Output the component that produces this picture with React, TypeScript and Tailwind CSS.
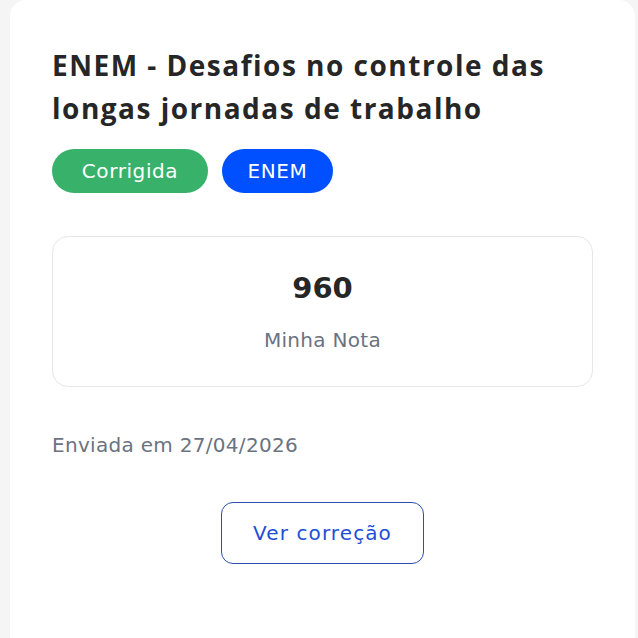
export default function App() {
  const body = { fontFamily: '"DejaVu Sans", "Open Sans", sans-serif' };
  return (
    <div className="min-h-[638px] w-[638px] overflow-hidden bg-[#f5f5f5] pl-[10px] pr-[3px]" style={body}>
      <div className="min-h-[638px] rounded-t-[16px] bg-white px-[42px] pt-[44px]">
        <h2
          className="max-w-[530px] text-[28px] font-bold leading-[43px] tracking-[1.5px] text-[#262626]"
          style={{ fontFamily: '"Open Sans", "Liberation Sans", sans-serif' }}
        >
          ENEM - Desafios no controle das longas jornadas de trabalho
        </h2>
        <div className="mt-[19px] flex gap-[14px]">
          <span className="flex h-[44px] w-[156px] items-center justify-center rounded-full bg-[#38b26b] text-[20px] tracking-[0.6px] text-white">
            Corrigida
          </span>
          <span className="flex h-[44px] w-[111px] items-center justify-center rounded-full bg-[#0050ff] text-[20px] tracking-[0.6px] text-white">
            ENEM
          </span>
        </div>
        <div className="mt-[43px] flex h-[151px] flex-col items-center justify-center rounded-[16px] border border-[#e5e7eb]">
          <div className="text-[29px] font-bold leading-none text-[#262626]">960</div>
          <div className="mt-[27px] text-[20px] leading-none tracking-[0.3px] text-[#6b7280]">Minha Nota</div>
        </div>
        <div className="mt-[43px] text-[20px] tracking-[0.3px] text-[#6b7280]">Enviada em 27/04/2026</div>
        <div className="mt-[42px] flex justify-center">
          <button className="h-[62px] w-[203px] rounded-[12px] border border-[#2a4fb0] bg-white text-[20px] font-medium tracking-[1.1px] text-[#1d4ed8]">
            Ver correção
          </button>
        </div>
      </div>
    </div>
  );
}
